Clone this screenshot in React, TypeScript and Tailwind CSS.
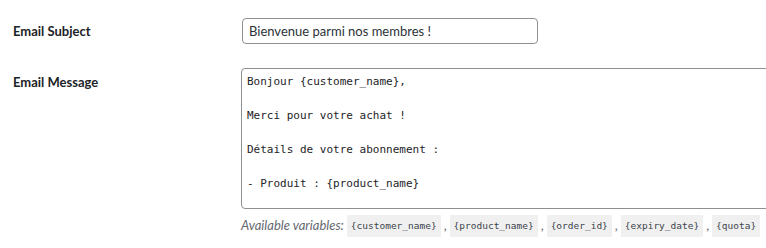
import React from "react";

const message = `Bonjour {customer_name},

Merci pour votre achat !

Détails de votre abonnement :

- Produit : {product_name}

`;

const variables = ["{customer_name}", "{product_name}", "{order_id}", "{expiry_date}", "{quota}"];

export default function App() {
  return (
    <div className="w-[766px] h-[248px] overflow-hidden bg-white pl-[13px] font-['Lato',sans-serif] text-[#1d2327]">
      <div className="flex items-center pt-[18px]">
        <label className="w-[229px] shrink-0 text-[13px] font-bold leading-5">Email Subject</label>
        <input
          type="text"
          readOnly
          value="Bienvenue parmi nos membres !"
          className="w-[296px] h-[26px] rounded-[4px] border border-[#8c8f94] bg-white px-[6px] font-['Lato',sans-serif] text-[13px] text-[#2c3338] outline-none"
        />
      </div>

      <div className="flex items-start mt-[24px]">
        <label className="w-[228px] shrink-0 pt-[4px] text-[13px] font-bold leading-5">Email Message</label>
        <div className="flex flex-col">
          <textarea
            readOnly
            value={message}
            className="w-[560px] h-[141px] resize-none overflow-hidden rounded-[4px] border border-[#8c8f94] bg-white px-[5px] py-[4px] font-['DejaVu_Sans_Mono',monospace] text-[11px] leading-[17px] text-[#1d2327] outline-none"
          />
          <p className="mt-[6px] flex items-center text-[13px] italic text-[#646970]">
            <span className="mr-[3px]">Available variables:</span>
            {variables.map((v, i) => (
              <React.Fragment key={v}>
                <code className="bg-[#f0f0f1] px-[4px] py-[4px] font-['DejaVu_Sans_Mono',monospace] text-[9.5px] not-italic leading-[14px] text-[#3c434a]">
                  {v}
                </code>
                {i < variables.length - 1 && <span className="px-[3px] not-italic">,</span>}
              </React.Fragment>
            ))}
          </p>
        </div>
      </div>
    </div>
  );
}
